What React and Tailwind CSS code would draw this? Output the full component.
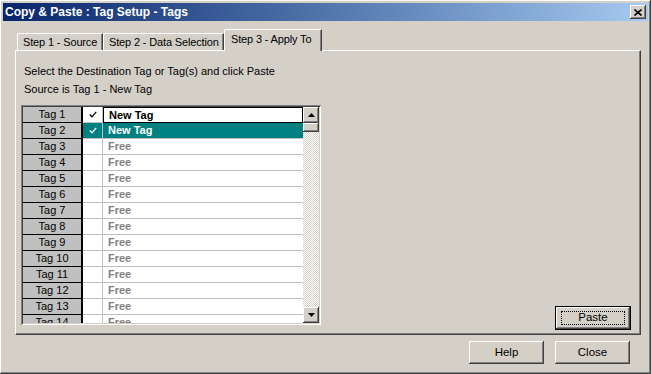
import React from 'react';
import clsx from 'clsx';

const raised =
  'shadow-[inset_-1px_-1px_#404040,inset_1px_1px_#ffffff,inset_-2px_-2px_#808080,inset_2px_2px_#d4d0c8]';

const rows = Array.from({ length: 14 }, (_, i) => ({
  label: `Tag ${i + 1}`,
  name: i < 2 ? 'New Tag' : 'Free',
  checked: i < 2,
}));

const Check = ({ white }) => (
  <svg width="8" height="7" viewBox="0 0 8 7">
    <polyline points="0.8,3.5 3,5.8 7.2,0.8" fill="none" stroke={white ? '#ffffff' : '#000000'} strokeWidth="1.3" />
  </svg>
);

const Arrow = ({ down }) => (
  <svg width="7" height="4" viewBox="0 0 7 4">
    <polygon points={down ? '0,0 7,0 3.5,4' : '0,4 7,4 3.5,0'} fill="#000" />
  </svg>
);

const Button = ({ label, isDefault }) => (
  <div className={clsx('flex', isDefault && 'border border-black')}>
    <div
      className={clsx(
        'flex items-center justify-center bg-[#d4d0c8] text-[11.5px] text-black',
        raised,
        isDefault ? 'w-[74px] h-[22px]' : 'w-[75px] h-[23px]'
      )}
    >
      {isDefault ? (
        <div className="w-[64px] h-[14px] border border-dotted border-black flex items-center justify-center">
          {label}
        </div>
      ) : (
        label
      )}
    </div>
  </div>
);

const Row = ({ row, index }) => {
  const focused = index === 0;
  const selected = index === 1;
  return (
    <div className="flex h-[16px] shrink-0">
      <div className="w-[60px] bg-[#c0c0c0] border-r-2 border-b border-black flex items-center justify-center text-[11px] text-black leading-none">
        {row.label}
      </div>
      <div
        className={clsx(
          'w-[20px] border-r border-b border-[#c0c0c0] flex items-center justify-center',
          selected ? 'bg-[#008080]' : 'bg-white'
        )}
      >
        {row.checked && <Check white={selected} />}
      </div>
      <div
        className={clsx(
          'flex-1 flex items-center pl-[5px] text-[11px] font-bold leading-none',
          focused ? 'border border-black bg-white text-black' : 'border-b border-[#c0c0c0]',
          selected && 'bg-[#008080] text-white',
          !focused && !selected && 'bg-white text-[#808080]'
        )}
      >
        {row.name}
      </div>
    </div>
  );
};

const App = () => {
  return (
    <div className="w-[651px] h-[374px] bg-[#d4d0c8] p-[3px] flex flex-col font-['Liberation_Sans',Arial,sans-serif] shadow-[inset_-1px_-1px_#404040,inset_1px_1px_#ffffff,inset_-2px_-2px_#808080] select-none">
      {/* title bar */}
      <div className="h-[18px] flex items-center justify-between pl-[2px] pr-[2px] bg-linear-to-r from-[#0a246a] to-[#a6caf0]">
        <span className="text-white font-bold text-[12px] leading-none">Copy &amp; Paste : Tag Setup - Tags</span>
        <div className={clsx('w-[16px] h-[14px] bg-[#d4d0c8] flex items-center justify-center', raised)}>
          <svg width="8" height="7" viewBox="0 0 8 7">
            <path d="M0.5 0.5 L7.5 6.5 M7.5 0.5 L0.5 6.5" stroke="#000" strokeWidth="1.6" />
          </svg>
        </div>
      </div>

      {/* tabs */}
      <div className="mt-[8px] ml-[12px] flex flex-col">
        <div className="flex items-end h-[21px] pl-[2px] text-[11px] text-black tracking-[-0.15px]">
          <div className="w-[86px] h-[17px] border-t border-l border-white border-r border-r-[#404040] rounded-tl-[2px] flex items-center pl-[5px] pt-[1px] shadow-[inset_-1px_0_#808080]">
            Step 1 - Source
          </div>
          <div className="w-[121px] h-[17px] border-t border-l border-white border-r border-r-[#404040] rounded-tl-[2px] flex items-center pl-[5px] pt-[1px] shadow-[inset_-1px_0_#808080]">
            Step 2 - Data Selection
          </div>
          <div className="relative z-10 -mb-[1px] w-[98px] h-[22px] bg-[#d4d0c8] border-t border-l border-white border-r border-r-[#404040] rounded-tl-[2px] flex items-center pl-[6px] pb-[2px] shadow-[inset_-1px_0_#808080]">
            Step 3 - Apply To
          </div>
        </div>

        {/* panel */}
        <div className="w-[626px] h-[285px] border-t border-l border-white border-r border-b border-r-[#404040] border-b-[#404040] shadow-[inset_-1px_-1px_#808080] flex">
          <div className="flex flex-col pl-[5px] pt-[11px]">
            <div className="pl-[3px] text-[11px] text-black leading-[18px]">Select the Destination Tag or Tag(s) and click Paste</div>
            <div className="pl-[3px] text-[11px] text-black leading-[18px]">Source is Tag 1 - New Tag</div>
            <div className="mt-[7px] w-[300px] h-[220px] p-[2px] bg-white shadow-[inset_1px_1px_#808080,inset_-1px_-1px_#ffffff,inset_2px_2px_#404040,inset_-2px_-2px_#d4d0c8] flex">
              <div className="flex-1 flex flex-col overflow-hidden">
                {rows.map((row, i) => (
                  <Row key={row.label} row={row} index={i} />
                ))}
              </div>
              <div className="w-[16px] flex flex-col">
                <div className={clsx('h-[16px] bg-[#d4d0c8] flex items-center justify-center', raised)}>
                  <Arrow />
                </div>
                <div className={clsx('h-[9px] bg-[#d4d0c8]', raised)} />
                <div className="flex-1 bg-[image:repeating-conic-gradient(#d4d0c8_0%_25%,#ffffff_0%_50%)] bg-[length:2px_2px]" />
                <div className={clsx('h-[16px] bg-[#d4d0c8] flex items-center justify-center', raised)}>
                  <Arrow down />
                </div>
              </div>
            </div>
          </div>
          <div className="flex-1 flex items-end justify-end pr-[9px] pb-[4px]">
            <Button label="Paste" isDefault />
          </div>
        </div>
      </div>

      {/* bottom buttons */}
      <div className="mt-[6px] flex justify-end gap-[11px] pr-[18px]">
        <Button label="Help" />
        <Button label="Close" />
      </div>
    </div>
  );
};

export default App;
